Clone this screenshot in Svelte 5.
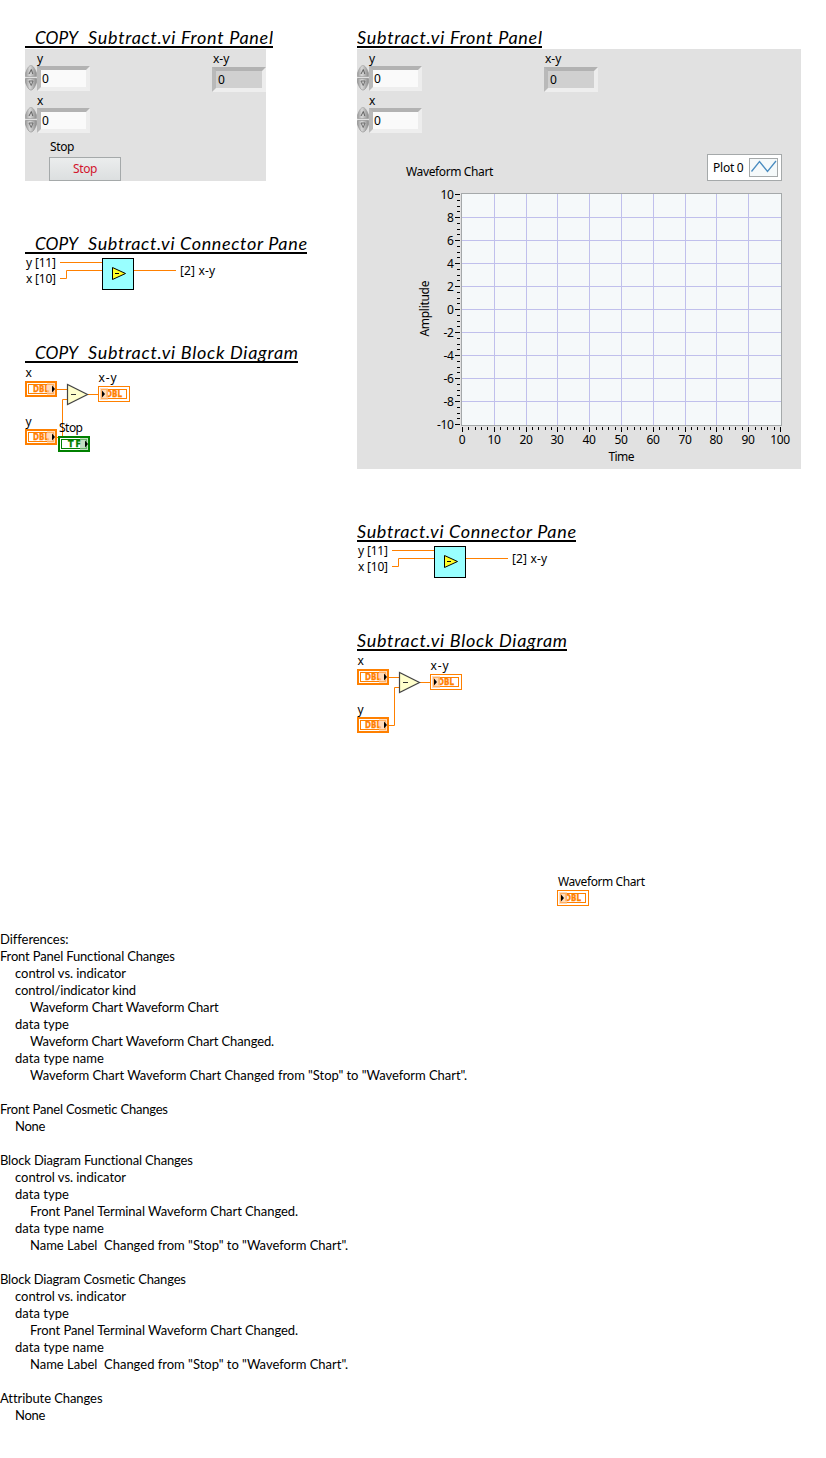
<script>
  const xTicks = Array.from({ length: 51 }, (_, i) => ({
    x: Math.round(105 + i * 6.36),
    major: i % 5 === 0,
    value: i * 2
  }));
  const yTicks = Array.from({ length: 41 }, (_, i) => ({
    y: Math.round(13 + i * 5.75),
    major: i % 4 === 0,
    value: 10 - i / 2
  }));

  const differences = [
    [0, 'Differences:', 68],
    [0, 'Front Panel Functional Changes', 175],
    [1, 'control vs. indicator', 111],
    [1, 'control/indicator kind', 121],
    [2, 'Waveform Chart Waveform Chart', 188.5],
    [1, 'data type', 54],
    [2, 'Waveform Chart Waveform Chart Changed.', 244],
    [1, 'data type name', 89],
    [2, 'Waveform Chart Waveform Chart Changed from "Stop" to "Waveform Chart".', 437],
    [0, '', 0],
    [0, 'Front Panel Cosmetic Changes', 168],
    [1, 'None', 30],
    [0, '', 0],
    [0, 'Block Diagram Functional Changes', 193],
    [1, 'control vs. indicator', 111],
    [1, 'data type', 54],
    [2, 'Front Panel Terminal Waveform Chart Changed.', 268],
    [1, 'data type name', 89],
    [2, 'Name Label  Changed from "Stop" to "Waveform Chart".', 318],
    [0, '', 0],
    [0, 'Block Diagram Cosmetic Changes', 186],
    [1, 'control vs. indicator', 111],
    [1, 'data type', 54],
    [2, 'Front Panel Terminal Waveform Chart Changed.', 268],
    [1, 'data type name', 89],
    [2, 'Name Label  Changed from "Stop" to "Waveform Chart".', 318],
    [0, '', 0],
    [0, 'Attribute Changes', 102],
    [1, 'None', 30]
  ];

  // Spreads a line's letters so that it fills the given measure.
  function measure(node, width) {
    const natural = node.getBoundingClientRect().width;
    const count = node.textContent.length;
    if (count) node.style.letterSpacing = (width - natural) / count + 'px';
  }
</script>

{#snippet heading(title, width, copy)}
  <h2 style="width: {width}px">
    <svg {width} height="18">
      {#if copy}
        <text x="10" y="15.500" textLength="43" lengthAdjust="spacingAndGlyphs">COPY</text>
        <text x="63" y="15.500" textLength={width - 63}>{title}</text>
      {:else}
        <text x="0" y="15.500" textLength={width}>{title}</text>
      {/if}
    </svg>
  </h2>
{/snippet}

{#snippet numeric(label)}
  <div class="numeric">
    <span class="label">{label}</span>
    <div class="entry">
      <svg class="spinner" width="12" height="26" viewBox="0 0 12 26">
        <defs>
          <linearGradient id="metal" x1="0" x2="1">
            <stop offset="0" stop-color="#9a9a9a" />
            <stop offset=".4" stop-color="#d8d8d8" />
            <stop offset="1" stop-color="#8c8c8c" />
          </linearGradient>
        </defs>
        <path d="M.5 11.500V8C2 3.500 4 .5 6 .5S10 3.500 11.500 8v3.500z" fill="url(#metal)" stroke="#999" stroke-width=".6" />
        <path d="M.5 13.500v4c1.500 4.500 3.500 7.500 5.500 7.500s4-3 5.500-7.500v-4z" fill="url(#metal)" stroke="#8a8a8a" stroke-width=".6" />
        <path d="M4 9l2.300-4.500L7.800 9" fill="#ccc" stroke="#555" stroke-width=".9" />
        <path d="M8 16l-1.800 4.500L4 16z" fill="#ccc" stroke="#666" stroke-width=".9" />
      </svg>
      <div class="field">0</div>
    </div>
  </div>
{/snippet}

{#snippet controls()}
  <div class="controls">
    <div>
      {@render numeric('y')}
      {@render numeric('x')}
    </div>
    <div class="indicator">
      <span class="label">x-y</span>
      <div class="field readonly">0</div>
    </div>
  </div>
{/snippet}

{#snippet wire(d)}
  <svg overflow="visible"><path {d} fill="none" stroke="#ff8000" stroke-width="1" /></svg>
{/snippet}

{#snippet connector()}
  <svg class="diagram" width="220" height="36">
    <text x="1" y="13" textLength="30">y [11]</text>
    <text x="1" y="29" textLength="30">x [10]</text>
    <text x="155" y="21" textLength="35">[2] x-y</text>
    {@render wire('M35 8.5H77M35 24.5H41.5V16.5H77M109 16.5H151')}
    <rect x="77.500" y="4.500" width="31" height="31" fill="#9ff" stroke="#000" />
    <path d="M87.500 13.500v12L100.500 19.500z" fill="#ffff26" stroke="#000" />
    <path d="M90 19.500h4" stroke="#000" />
  </svg>
{/snippet}

{#snippet source(x, y, name, color, tint)}
  <g transform="translate({x} {y})">
    <g shape-rendering="crispEdges">
      <rect x="1" y="1" width="30" height="14" fill="#fff" stroke={color} stroke-width="2" />
      <rect x="3.500" y="3.500" width="25" height="9" fill="#fff" stroke={color} />
    </g>
    {#if name === 'TF'}
      <text class="type" x="10" y="11" textLength="13" fill={color} stroke={color}>TF</text>
    {:else}
      <text class="type" x="8" y="11" textLength="16" lengthAdjust="spacingAndGlyphs" fill={color} stroke={color}>{name}</text>
    {/if}
    <rect x="22" y="2" width="8" height="12" fill={tint} fill-opacity=".65" />
    <path d="M27 4.500v7l3-3.500z" fill="#000" />
  </g>
{/snippet}

{#snippet sink(x, y)}
  <g transform="translate({x} {y})">
    <g shape-rendering="crispEdges">
      <rect x=".5" y=".5" width="31" height="15" fill="#fff" stroke="#ff8000" />
      <rect x="3.500" y="3.500" width="25" height="9" fill="#fff" stroke="#ff8000" />
    </g>
    <text class="type" x="8" y="11" textLength="16" lengthAdjust="spacingAndGlyphs" fill="#ff8000" stroke="#ff8000">DBL</text>
    <rect x="2" y="2" width="8" height="12" fill="#ffc896" fill-opacity=".65" />
    <path d="M4 4.500v7l3-3.500z" fill="#000" />
  </g>
{/snippet}

{#snippet block(stop)}
  <svg class="diagram" width={stop ? 273 : 300} height={stop ? 90 : 255}>
    {@render wire('M32 26.5H42M32 74.5H37.5V36.5H42M63 31.5H73')}
    <path d="M42.500 21.500v20L62.500 31.500z" fill="#ffc" stroke="#444" stroke-width="1.200" />
    <path d="M46 31.500h5" stroke="#333" />
    <text x=".5" y="14">x</text>
    <text x=".5" y="62.500">y</text>
    <text x="73.500" y="19" textLength="18">x-y</text>
    {@render source(0, 18, 'DBL', '#ff8000', '#ffc896')}
    {@render source(0, 66, 'DBL', '#ff8000', '#ffc896')}
    {@render sink(73, 23)}
    {#if stop}
      <text x="34" y="69" textLength="24">Stop</text>
      {@render source(33, 73, 'TF', '#008000', '#a0cca0')}
    {:else}
      <text x="201" y="235" textLength="87">Waveform Chart</text>
      {@render sink(200, 239)}
    {/if}
  </svg>
{/snippet}

<main>
  <div class="comparison">
    <section>
      {@render heading('Subtract.vi Front Panel', 248, true)}
      <div class="panel small">
        {@render controls()}
        <div class="stop">
          <span class="caption"><span use:measure={24}>Stop</span></span>
          <button><span use:measure={24}>Stop</span></button>
        </div>
      </div>
      {@render heading('Subtract.vi Connector Pane', 282, true)}
      {@render connector()}
      {@render heading('Subtract.vi Block Diagram', 273, true)}
      {@render block(true)}
    </section>

    <section>
      {@render heading('Subtract.vi Front Panel', 185, false)}
      <div class="panel large">
        {@render controls()}
        <div class="chart-head">
          <div class="caption"><span use:measure={87}>Waveform Chart</span></div>
          <div class="legend">
            <span use:measure={30.5}>Plot 0</span>
            <svg width="29" height="19">
              <rect x=".5" y=".5" width="28" height="18" fill="#f5f9fa" stroke="#a5a9aa" />
              <path d="M2.500 13.500L10.500 3.500L18.500 13.500L27 3" fill="none" stroke="#4a8cc0" stroke-width="1.300" />
            </svg>
          </div>
        </div>
        <svg class="chart" width="444" height="288">
          <rect x="104.500" y="12.500" width="320" height="232" fill="#f5f9fa" stroke="#a5a9aa" />
          {#each xTicks as t}
            {#if t.major}
              {#if t.value > 0 && t.value < 100}
                <path d="M{t.x + 0.5} 13V244" stroke="#c0c0ec" />
              {/if}
              <text class="tick" x={t.x} y="263" text-anchor="middle">{t.value}</text>
            {/if}
            <path d="M{t.x + 0.5} 246v{t.major ? 5 : 3}" stroke="#000" />
          {/each}
          {#each yTicks as t}
            {#if t.major}
              {#if t.value < 10 && t.value > -10}
                <path d="M105 {t.y + 0.5}H424" stroke="#c0c0ec" />
              {/if}
              <text class="tick" x="96.500" y={t.y + 5} text-anchor="end">{t.value}</text>
            {/if}
            <path d="M103 {t.y + 0.5}h{t.major ? -5 : -3}" stroke="#000" />
          {/each}
          <text x="251.500" y="280" textLength="26">Time</text>
          <text transform="translate(72 155.500) rotate(-90)" textLength="56">Amplitude</text>
        </svg>
      </div>
      {@render heading('Subtract.vi Connector Pane', 219, false)}
      {@render connector()}
      {@render heading('Subtract.vi Block Diagram', 210, false)}
      {@render block(false)}
    </section>
  </div>

  <div class="differences">
    {#each differences as [level, line, width]}
      <p class="level{level}"><span use:measure={width}>{line}</span></p>
    {/each}
  </div>
</main>

<style>
  :global(body) { background: #fff; }
  main {
    height: 1458px;
    overflow: hidden;
    color: #000;
    font: 12px/16px "Noto Sans", sans-serif;
  }
  svg { display: block; }
  .comparison {
    display: grid;
    grid-template-columns: 332px 444px;
    padding: 28px 25px 25px;
    height: 878px;
  }
  h2 {
    margin: 0;
    height: 18px;
    border-bottom: 2px solid #000;
  }
  h2 text { font: italic 18px Lato, sans-serif; }
  .panel + h2, .diagram + h2 { margin-top: 53px; }
  .panel { margin-top: 1px; background: #e1e1e1; }
  .small { width: 241px; height: 132px; }
  .large { width: 444px; height: 420px; }
  .controls { display: flex; justify-content: space-between; width: 241px; }
  .numeric { height: 42px; }
  .label { display: block; height: 16px; line-height: 20px; }
  .numeric .label { padding-left: 12px; }
  .entry { display: flex; }
  .field {
    box-sizing: border-box;
    width: 53px;
    height: 25px;
    margin-top: 1px;
    border: 4px solid;
    border-color: #b2b2b2 #ededed #eee #b9b9b9;
    background: #fafafa;
    padding-left: 1px;
    line-height: 17px;
  }
  .indicator { width: 54px; }
  .indicator .label { padding-left: 1px; height: 17px; }
  .readonly { width: 54px; background: #d0d0d0; padding-left: 2px; }
  .stop { display: flex; flex-direction: column; padding: 6px 0 0 24px; }
  .stop .caption { padding-left: 1px; height: 18px; }
  button {
    box-sizing: border-box;
    width: 72px;
    height: 24px;
    padding: 0;
    border: 1px solid #a5a9aa;
    border-radius: 0;
    background: linear-gradient(#ebeded, #dcdfe0);
    color: #d2142d;
    font: inherit;
  }
  .chart-head {
    display: flex;
    justify-content: space-between;
    padding: 21px 19px 0 49px;
    height: 27px;
  }
  .chart-head .caption { padding-top: 10px; }
  .legend {
    box-sizing: border-box;
    display: flex;
    align-items: center;
    justify-content: space-between;
    width: 75px;
    height: 27px;
    padding: 0 3px 0 5px;
    border: 1px solid #a5a9aa;
    background: #fff;
  }
  .diagram, .chart { overflow: visible; }
  .tick { letter-spacing: -.4px; }
  .diagram .type { font: bold 8.2px "DejaVu Sans", sans-serif; stroke-width: .3px; }
  .differences { font: 13px/17px Lato, sans-serif; white-space: pre; }
  .differences p { margin: 0; height: 17px; }
  .differences .level1 { padding-left: 15px; }
  .differences .level2 { padding-left: 30px; }
</style>
